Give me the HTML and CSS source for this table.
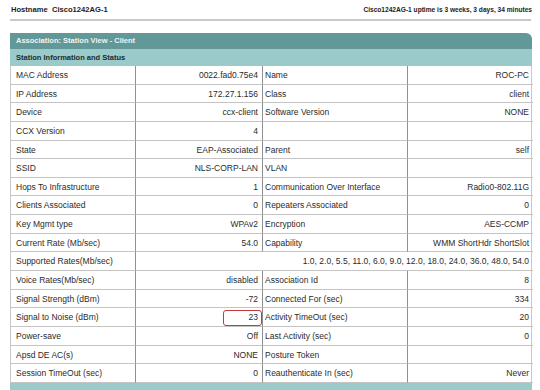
FILE: index.html
```html
<!DOCTYPE html>
<html>
<head>
<meta charset="utf-8">
<link rel="stylesheet" href="styles.css">
</head>
<body>
<div class="page">
  <div class="top">
    <span class="hostname">Hostname&nbsp; Cisco1242AG-1</span>
    <span class="uptime">Cisco1242AG-1 uptime is 3 weeks, 3 days, 34 minutes</span>
  </div>
  <div class="rule"></div>
  <div class="panel">
    <div class="title">Association: Station View - Client</div>
    <div class="subtitle">Station Information and Status</div>
    <div class="grid">
      <div class="c l">MAC Address</div><div class="c v">0022.fad0.75e4</div><div class="c l2">Name</div><div class="c v4">ROC-PC</div>
      <div class="c l">IP Address</div><div class="c v">172.27.1.156</div><div class="c l2">Class</div><div class="c v4">client</div>
      <div class="c l">Device</div><div class="c v">ccx-client</div><div class="c l2">Software Version</div><div class="c v4">NONE</div>
      <div class="c l">CCX Version</div><div class="c v">4</div><div class="c l2"></div><div class="c v4"></div>
      <div class="c l">State</div><div class="c v">EAP-Associated</div><div class="c l2">Parent</div><div class="c v4">self</div>
      <div class="c l">SSID</div><div class="c v">NLS-CORP-LAN</div><div class="c l2">VLAN</div><div class="c v4"></div>
      <div class="c l">Hops To Infrastructure</div><div class="c v">1</div><div class="c l2">Communication Over Interface</div><div class="c v4">Radio0-802.11G</div>
      <div class="c l">Clients Associated</div><div class="c v">0</div><div class="c l2">Repeaters Associated</div><div class="c v4">0</div>
      <div class="c l">Key Mgmt type</div><div class="c v">WPAv2</div><div class="c l2">Encryption</div><div class="c v4">AES-CCMP</div>
      <div class="c l">Current Rate (Mb/sec)</div><div class="c v">54.0</div><div class="c l2">Capability</div><div class="c v4">WMM ShortHdr ShortSlot</div>
      <div class="c l">Supported Rates(Mb/sec)</div><div class="c v4 span3">1.0, 2.0, 5.5, 11.0, 6.0, 9.0, 12.0, 18.0, 24.0, 36.0, 48.0, 54.0</div>
      <div class="c l">Voice Rates(Mb/sec)</div><div class="c v">disabled</div><div class="c l2">Association Id</div><div class="c v4">8</div>
      <div class="c l">Signal Strength (dBm)</div><div class="c v">-72</div><div class="c l2">Connected For (sec)</div><div class="c v4">334</div>
      <div class="c l">Signal to Noise (dBm)</div><div class="c v marked">23<span class="highlight"></span></div><div class="c l2">Activity TimeOut (sec)</div><div class="c v4">20</div>
      <div class="c l">Power-save</div><div class="c v">Off</div><div class="c l2">Last Activity (sec)</div><div class="c v4">0</div>
      <div class="c l">Apsd DE AC(s)</div><div class="c v">NONE</div><div class="c l2">Posture Token</div><div class="c v4"></div>
      <div class="c l">Session TimeOut (sec)</div><div class="c v">0</div><div class="c l2">Reauthenticate In (sec)</div><div class="c v4">Never</div>
    </div>
    <div class="footer"></div>
  </div>
</div>
</body>
</html>
```

FILE: styles.css
```css
html, body {
  margin: 0;
  padding: 0;
  background: #ffffff;
}
body {
  font-family: "Liberation Sans", Arial, sans-serif;
  color: #2b2b2b;
}
.page {
  width: 522px;
  padding-left: 10px;
}
.top {
  display: flex;
  justify-content: space-between;
  align-items: center;
  height: 19px;
  padding: 0 0 0 1px;
  color: #1c1c1c;
}
.hostname {
  font-weight: bold;
  font-size: 7.6px;
}
.uptime {
  font-weight: bold;
  font-size: 6.6px;
}
.rule {
  height: 2px;
  background: #c9c9c9;
  margin-right: 1px;
}
.panel {
  margin-top: 12px;
}
.title {
  height: 16px;
  line-height: 16px;
  background: #629898;
  color: #eef5f5;
  font-weight: bold;
  font-size: 7.5px;
  padding-left: 6px;
  border-top-right-radius: 6px;
}
.subtitle {
  height: 17px;
  line-height: 17px;
  background: #9bcaca;
  color: #1e2a2a;
  font-weight: bold;
  font-size: 7.5px;
  padding-left: 6px;
}
.grid {
  display: grid;
  grid-template-columns: 125px 127px 145px 125px;
  grid-auto-rows: 18.65px;
  border-left: 1px solid #c8c8c8;
  border-right: 1px solid #c8c8c8;
}
.c {
  font-size: 8.5px;
  line-height: 17.65px;
  padding-top: 1px;
  box-sizing: border-box;
  border-bottom: 1px solid #c4c4c4;
  white-space: nowrap;
  overflow: visible;
}
.l {
  padding-left: 5px;
  border-right: 1px solid #8f8f8f;
}
.v {
  text-align: right;
  padding-right: 4px;
  border-right: 1px solid #8f8f8f;
}
.l2 {
  padding-left: 2px;
  border-right: 1px solid #8f8f8f;
}
.v4 {
  text-align: right;
  padding-right: 4px;
}
.span3 {
  grid-column: span 3;
}
.marked {
  position: relative;
}
.highlight {
  position: absolute;
  right: 0;
  top: 2px;
  width: 37px;
  height: 14px;
  border: 1.5px solid #c53a3c;
  border-radius: 3px;
}
.footer {
  height: 8px;
  background: #9bcaca;
}
```
